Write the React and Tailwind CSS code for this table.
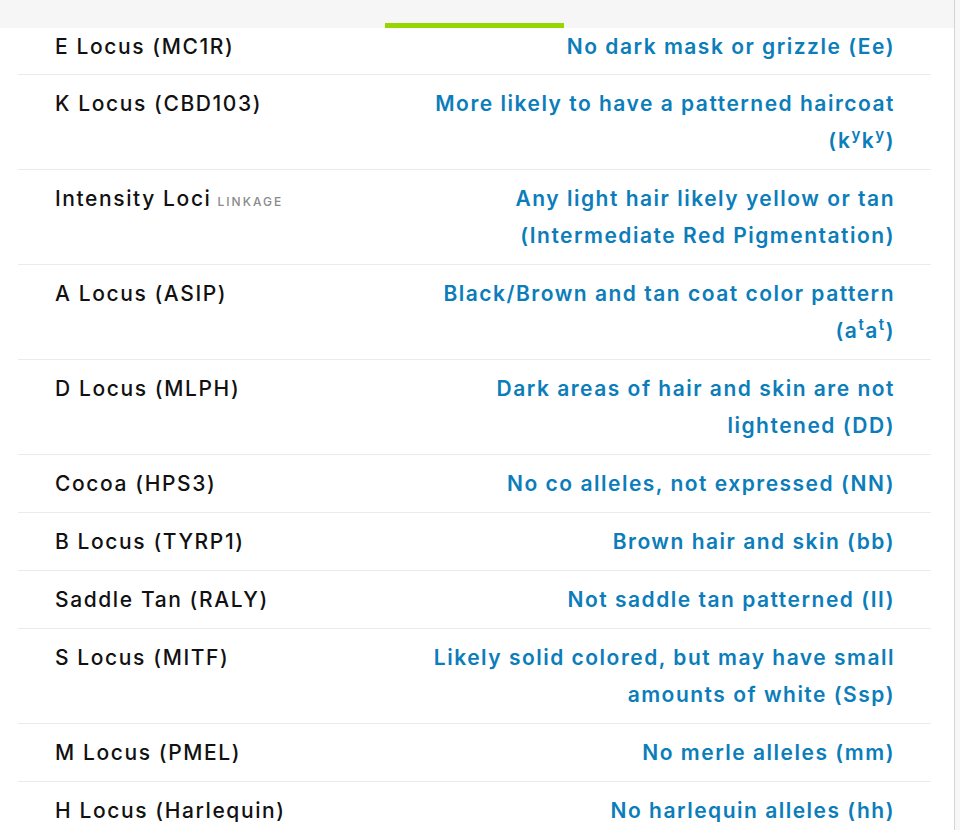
import React from "react";

const Sup = ({ children }) => <sup className="text-[0.72em] leading-none">{children}</sup>;

const rows = [
  { label: "E Locus (MC1R)", value: <>No dark mask or grizzle (Ee)</> },
  { label: "K Locus (CBD103)", value: <>More likely to have a patterned haircoat (k<Sup>y</Sup>k<Sup>y</Sup>)</> },
  { label: "Intensity Loci", tag: "LINKAGE", value: <>Any light hair likely yellow or tan (Intermediate Red Pigmentation)</> },
  { label: "A Locus (ASIP)", value: <>Black/Brown and tan coat color pattern (a<Sup>t</Sup>a<Sup>t</Sup>)</> },
  { label: "D Locus (MLPH)", value: <>Dark areas of hair and skin are not lightened (DD)</> },
  { label: "Cocoa (HPS3)", value: <>No co alleles, not expressed (NN)</> },
  { label: "B Locus (TYRP1)", value: <>Brown hair and skin (bb)</> },
  { label: "Saddle Tan (RALY)", value: <>Not saddle tan patterned (II)</> },
  { label: "S Locus (MITF)", value: <>Likely solid colored, but may have small amounts of white (Ssp)</> },
  { label: "M Locus (PMEL)", value: <>No merle alleles (mm)</> },
  { label: "H Locus (Harlequin)", value: <>No harlequin alleles (hh)</> },
];

export default function App() {
  return (
    <div className="flex w-[960px] h-[830px] overflow-hidden bg-white" style={{ fontFamily: "Inter, 'Noto Sans', sans-serif" }}>
      <div className="flex-1 flex flex-col">
        <div className="h-[28px] bg-[#f6f6f6] shrink-0 flex items-end">
          <div className="ml-[385px] w-[179px] h-[5px] bg-[#97d700]" />
        </div>
        <div className="ml-[18px] mr-[23px]">
          {rows.map((r, i) => (
            <div
              key={i}
              className={`flex justify-between items-start pl-[37px] pr-[36px] ${i === 0 ? "pt-0 pb-[9px]" : "pt-[10px] pb-[10px]"} border-b border-[#ebebeb]`}
            >
              <div className="text-[21px] leading-[37px] font-medium tracking-[1.6px] text-[#111] whitespace-nowrap">
                {r.label}
                {r.tag && (
                  <span className="ml-[6px] text-[12px] tracking-[2px] text-[#8a8a8a] font-medium">{r.tag}</span>
                )}
              </div>
              <div className="max-w-[466px] text-right text-[21px] leading-[37px] font-semibold tracking-[1.5px] text-[#0b7dba]">
                {r.value}
              </div>
            </div>
          ))}
        </div>
      </div>
      <div className="w-[6px] shrink-0 border-l border-[#d4d4d4] bg-[#f7f7f7]" />
    </div>
  );
}
